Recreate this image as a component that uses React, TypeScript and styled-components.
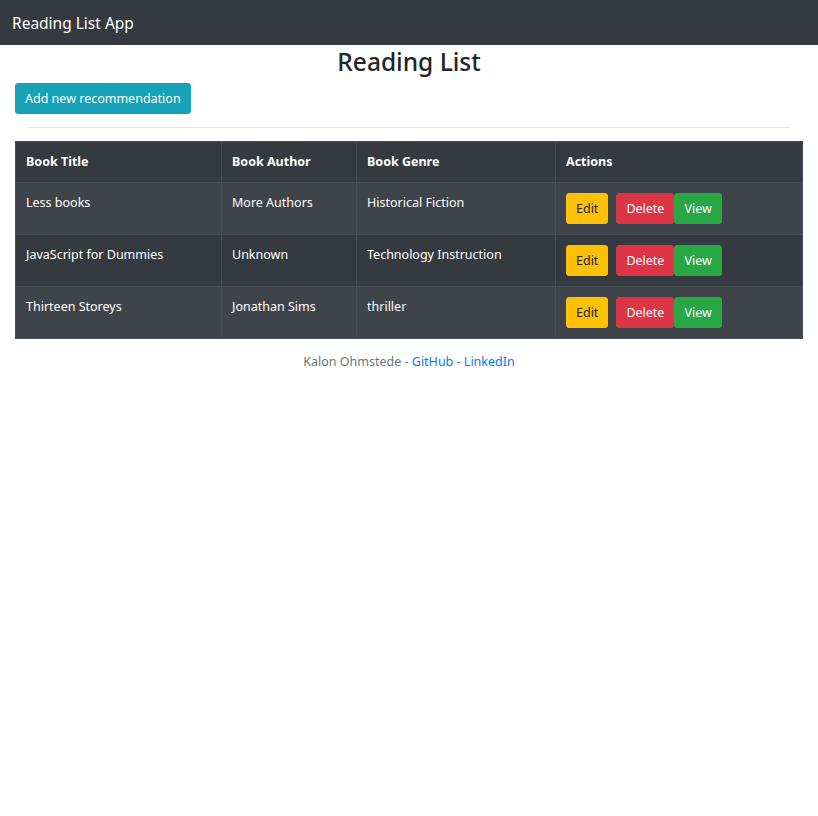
import React from 'react';
import styled, { createGlobalStyle } from 'styled-components';

const books = [
  { title: 'Less books', author: 'More Authors', genre: 'Historical Fiction' },
  { title: 'JavaScript for Dummies', author: 'Unknown', genre: 'Technology Instruction' },
  { title: 'Thirteen Storeys', author: 'Jonathan Sims', genre: 'thriller' },
];

export default function App() {
  return (
    <>
      <GlobalStyle />
      <Navbar>
        <Brand>Reading List App</Brand>
      </Navbar>
      <Main>
        <Title>Reading List</Title>
        <Button $variant="info">Add new recommendation</Button>
        <Divider />
        <Table>
          <thead>
            <tr>
              <Th $width={206}>Book Title</Th>
              <Th $width={135}>Book Author</Th>
              <Th $width={199}>Book Genre</Th>
              <Th>Actions</Th>
            </tr>
          </thead>
          <tbody>
            {books.map((b) => (
              <Row key={b.title}>
                <Td>{b.title}</Td>
                <Td>{b.author}</Td>
                <Td>{b.genre}</Td>
                <Td>
                  <Actions>
                    <Button $variant="warning">Edit</Button>
                    <Button $variant="danger">Delete</Button>
                    <Button $variant="success">View</Button>
                  </Actions>
                </Td>
              </Row>
            ))}
          </tbody>
        </Table>
        <Footer>
          Kalon Ohmstede - <Link href="#">GitHub</Link> - <Link href="#">LinkedIn</Link>
        </Footer>
      </Main>
    </>
  );
}

const GlobalStyle = createGlobalStyle`
  body {
    margin: 0;
    background: #fff;
    color: #212529;
    font-family: "Noto Sans", "Open Sans", "Liberation Sans", sans-serif;
  }
`;

const colors: Record<string, { bg: string; fg: string }> = {
  info: { bg: '#17a2b8', fg: '#fff' },
  warning: { bg: '#ffc107', fg: '#212529' },
  danger: { bg: '#dc3545', fg: '#fff' },
  success: { bg: '#28a745', fg: '#fff' },
};

const Navbar = styled.nav`
  height: 45px;
  background: #343a40;
  display: flex;
  align-items: center;
  padding: 0 12px;
`;

const Brand = styled.span`
  color: #fff;
  font-size: 15.5px;
`;

const Main = styled.main`
  padding: 0 15px;
`;

const Title = styled.h2`
  margin: 0;
  text-align: center;
  font-size: 24.5px;
  font-weight: 500;
  line-height: 34px;
`;

const Button = styled.button<{ $variant: string }>`
  font-family: inherit;
  font-size: 12.5px;
  line-height: 21px;
  padding: 4px 9px;
  border: 1px solid ${(p) => colors[p.$variant].bg};
  border-radius: 3px;
  background: ${(p) => colors[p.$variant].bg};
  color: ${(p) => colors[p.$variant].fg};
  cursor: pointer;
  margin-top: 4px;
`;

const Divider = styled.hr`
  border: 0;
  border-top: 1px solid rgba(0, 0, 0, 0.1);
  margin: 13px 13px;
`;

const Table = styled.table`
  width: 100%;
  table-layout: fixed;
  border-collapse: collapse;
  border: 1px solid #454d55;
  background: #343a40;
  color: #fff;
  font-size: 12.5px;
  line-height: 21px;
`;

const Th = styled.th<{ $width?: number }>`
  box-sizing: border-box;
  width: ${(p) => (p.$width ? `${p.$width}px` : 'auto')};
  text-align: left;
  font-weight: 700;
  padding: 9px 10px 10px;
  border: 1px solid #454d55;
`;

const Row = styled.tr`
  &:nth-child(odd) {
    background: #3e444a;
  }
`;

const Td = styled.td`
  padding: 9px 10px 10px;
  border: 1px solid #454d55;
  vertical-align: top;
`;

const Actions = styled.div`
  display: flex;
  align-items: center;

  & > button {
    margin-top: 1px;
  }

  & > button:first-child {
    margin-right: 8px;
  }
`;

const Footer = styled.p`
  margin: 12px 0 0;
  text-align: center;
  font-size: 12.5px;
  line-height: 21px;
  color: #6c757d;
`;

const Link = styled.a`
  color: #007bff;
  text-decoration: none;
`;
